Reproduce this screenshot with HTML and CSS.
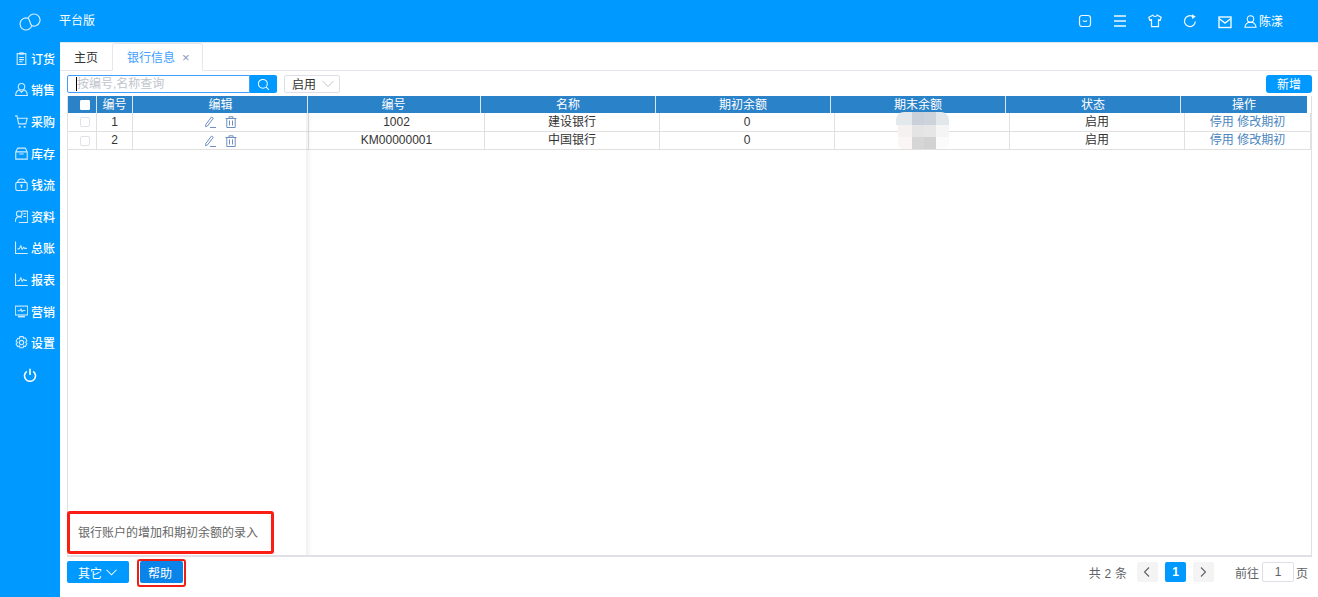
FILE: index.html
```html
<!DOCTYPE html>
<html lang="zh">
<head>
<meta charset="utf-8">
<title>银行信息</title>
<link rel="stylesheet" href="styles.css">
</head>
<body>
<div class="app">
  <header class="topbar">
    <div class="brand">
      <svg class="logo" viewBox="0 0 20 16" width="20" height="16"><path d="M8.200 4.400A6 6 0 1 1 11.800 11.600A6 6 0 1 1 8.200 4.400C10.500 6 9.500 10 11.800 11.600"/></svg>
      <span class="brand-name">平台版</span>
    </div>
    <div class="top-tools">
      <svg class="ti" viewBox="0 0 14 14"><rect x="1.500" y="1.500" width="11" height="11" rx="2.500"/><path d="M5 6.500c.8 1.200 3.200 1.200 4 0"/></svg>
      <svg class="ti ti-bars" viewBox="0 0 14 14"><path d="M1 2h12M1 7h12M1 12h12"/></svg>
      <svg class="ti" viewBox="0 0 14 14"><path d="M4.800 1.200L.8 3.300l1 3 1.700-.6v7h7v-7l1.700.6 1-3-4-2.100c-.5 1.700-3.900 1.700-4.400 0z"/></svg>
      <svg class="ti" viewBox="0 0 14 14"><path d="M12.300 7.500A5.400 5.400 0 1 1 9.500 2.400"/><path class="fill" d="M9 .3l3.800 2.500L9 5z"/></svg>
      <svg class="ti ti-mail" viewBox="0 0 14 14"><rect x="1" y="2" width="12" height="10.500"/><path d="M1 3.500l6 4.500 6-4.500"/></svg>
      <span class="user">
        <svg class="ti-user" viewBox="0 0 14 14"><circle cx="7" cy="4.300" r="3.500"/><path d="M1 13.300c.3-3.500 3-5.500 6-5.500s5.700 2 6 5.500z"/></svg>
        <span>陈漾</span>
      </span>
    </div>
  </header>

  <div class="body">
    <nav class="sidebar">
      <a class="nav-item"><svg viewBox="0 0 12 12"><path d="M2 1.500h8v10H2zM3.800 5h4.400M3.800 7h4.400M3.800 9h3"/><path class="fill" d="M4 .3h4v2.200H4z"/></svg><span>订货</span></a>
      <a class="nav-item"><svg viewBox="0 0 12 12"><circle cx="6" cy="3.500" r="3"/><path d="M4.200 6.300C2 6.900.7 8.700.6 11.500h10.800c-.1-2.800-1.400-4.600-3.600-5.200M4.200 6.800L6 8.500l1.800-1.700"/></svg><span>销售</span></a>
      <a class="nav-item"><svg viewBox="0 0 12 12"><path d="M.1 .8h1.700l1.600 7.400h6.500L11.300 3 2.400 2.800"/><path d="M3.500 11h1.700M8 11h1.700" stroke-width="1.500"/></svg><span>采购</span></a>
      <a class="nav-item"><svg viewBox="0 0 12 12"><path d="M2.500 1h7l1.800 3.500v6.700H.7V4.500zM.7 4.500h10.600M4 6.500h4"/></svg><span>库存</span></a>
      <a class="nav-item"><svg viewBox="0 0 12 12"><rect x=".7" y="4" width="10.600" height="7.500" rx="1.500"/><path d="M2.500 4c0-4.200 7-4.200 7 0"/><path class="fill" d="M5 6h2v1.500l-.5.300V9.500h-1V7.800L5 7.500z"/></svg><span>钱流</span></a>
      <a class="nav-item"><svg viewBox="0 0 12 12"><circle cx="3.900" cy="3.500" r="2.600"/><path d="M.2 11c.2-3 1.700-4.700 3.700-4.700 1 0 1.800.4 2.400 1.100M6.500 1h5.200v10.500H3.500M7.800 3.500h2.500M7.800 6h2.500"/></svg><span>资料</span></a>
      <a class="nav-item"><svg viewBox="0 0 12 12"><path d="M.5 .5v11h11.300M2.300 7.500l1.800-.5 1.300-2.500 1.200 3.300 1.400-2 1 1h2"/></svg><span>总账</span></a>
      <a class="nav-item"><svg viewBox="0 0 12 12"><path d="M.5 .5v11h11.300M2.300 7.500l1.800-.5 1.300-2.500 1.200 3.300 1.400-2 1 1h2"/></svg><span>报表</span></a>
      <a class="nav-item"><svg viewBox="0 0 12 12"><rect x=".3" y="1" width="11.400" height="8.200"/><path d="M2.500 5.300h2l1-1.500 1 2.300 1-1h2"/><path d="M2.800 10.700h6.400" stroke-width="1.500"/></svg><span>营销</span></a>
      <a class="nav-item"><svg viewBox="0 0 12 12"><path d="M4.500 .6h3l.4 1.600 1.600-.5 1.500 2.600-1.200 1.400 1.200 1.400-1.500 2.600-1.600-.5-.4 1.600h-3l-.4-1.600-1.600.5L1 7.500 2.200 6.100 1 4.700l1.500-2.600 1.600.5z"/><circle cx="6" cy="6" r="2"/></svg><span>设置</span></a>
      <a class="nav-power"><svg viewBox="0 0 14 14"><path d="M7 .8v6.200M3.800 3.300a5.500 5.500 0 1 0 6.400 0"/></svg></a>
    </nav>

    <main class="main">
      <div class="tabs">
        <span class="tab">主页</span>
        <span class="tab tab-active">银行信息<i class="tab-close">×</i></span>
      </div>

      <div class="content">
        <div class="toolbar">
          <div class="search">
            <input class="search-input" placeholder="按编号,名称查询">
            <span class="caret"></span>
            <button class="search-btn" aria-label="搜索"><svg viewBox="0 0 14 14"><circle cx="6.300" cy="6.300" r="4.800"/><path d="M9.800 9.800l3 3"/></svg></button>
          </div>
          <div class="select">启用<svg viewBox="0 0 12 12"><path d="M.5 3L6 8.500 11.500 3"/></svg></div>
          <button class="btn-add">新增</button>
        </div>

        <div class="grid">
          <div class="thead">
            <div class="th c-check"><span class="cb cb-head"></span></div>
            <div class="th c-num">编号</div>
            <div class="th c-edit">编辑</div>
            <div class="th c-a">编号</div>
            <div class="th c-b">名称</div>
            <div class="th c-b">期初余额</div>
            <div class="th c-b">期末余额</div>
            <div class="th c-b">状态</div>
            <div class="th c-last">操作</div>
          </div>
          <div class="row">
            <div class="td c-check"><span class="cb"></span></div>
            <div class="td c-num">1</div>
            <div class="td c-edit icons">
              <svg viewBox="0 0 12 12"><path d="M.8 8.500L6.500 1l1.800 1.300-5.700 7.500-1.900 1zM5 11.500h6"/></svg>
              <svg viewBox="0 0 12 12"><path d="M.5 2.500h11M4 2.500V.8h4v1.700M1.800 2.500v9h8.400v-9M4.500 4.500v5M7.500 4.500v5"/></svg>
            </div>
            <div class="td c-a2">1002</div>
            <div class="td c-b">建设银行</div>
            <div class="td c-b">0</div>
            <div class="td c-b"></div>
            <div class="td c-b">启用</div>
            <div class="td c-last2 ops">停用 修改期初</div>
          </div>
          <div class="row">
            <div class="td c-check"><span class="cb"></span></div>
            <div class="td c-num">2</div>
            <div class="td c-edit icons">
              <svg viewBox="0 0 12 12"><path d="M.8 8.500L6.500 1l1.800 1.300-5.700 7.500-1.900 1zM5 11.500h6"/></svg>
              <svg viewBox="0 0 12 12"><path d="M.5 2.500h11M4 2.500V.8h4v1.700M1.800 2.500v9h8.400v-9M4.500 4.500v5M7.500 4.500v5"/></svg>
            </div>
            <div class="td c-a2">KM00000001</div>
            <div class="td c-b">中国银行</div>
            <div class="td c-b">0</div>
            <div class="td c-b"></div>
            <div class="td c-b">启用</div>
            <div class="td c-last2 ops">停用 修改期初</div>
          </div>
          <div class="fixed-shadow"></div>
          <div class="mosaic">
            <i class="m1"></i><i class="m2"></i><i class="m3"></i><i class="m4"></i>
            <i class="m5"></i><i class="m6"></i><i class="m7"></i><i class="m8"></i>
            <i class="m9"></i><i class="m10"></i><i class="m11"></i><i class="m12"></i>
          </div>
          <div class="help-note">银行账户的增加和期初余额的录入</div>
        </div>

        <div class="footer">
          <button class="btn-other">其它<svg viewBox="0 0 12 12"><path d="M.5 3L6 8.500 11.500 3"/></svg></button>
          <button class="btn-help">帮助</button>
          <div class="pager">
            <span class="total">共 2 条</span>
            <button class="pg"><svg viewBox="0 0 12 12"><path d="M8 1.500L3.500 6 8 10.500"/></svg></button>
            <button class="pg pg-on">1</button>
            <button class="pg"><svg viewBox="0 0 12 12"><path d="M4 1.500L8.500 6 4 10.500"/></svg></button>
            <span class="goto">前往</span>
            <span class="page-input">1</span>
            <span class="page-unit">页</span>
          </div>
        </div>
      </div>
    </main>
  </div>
</div>
</body>
</html>
```
FILE: styles.css
```css
* { box-sizing: border-box; }
html, body { margin: 0; height: 100%; overflow: hidden; }
body {
  font-family: "Liberation Sans", "Noto Sans CJK SC", sans-serif;
  font-size: 12px;
  color: #333;
  background: #fff;
}
button { font: inherit; border: 0; padding: 0; }
.app { display: flex; flex-direction: column; width: 1318px; height: 597px; }

.topbar {
  height: 42px;
  flex: none;
  background: #0099ff;
  color: #fff;
  display: flex;
  align-items: center;
  justify-content: space-between;
}
.brand { display: flex; align-items: center; padding-left: 20px; }
.logo { margin-right: 19px; margin-top: 2px; fill: none; stroke: #d3ecff; stroke-width: 1.200; overflow: visible; }
.brand-name { position: relative; top: -2px; }
.top-tools { display: flex; align-items: center; padding-right: 35px; }
.ti { width: 14px; height: 14px; fill: none; stroke: #f0f9ff; stroke-width: 1.200; margin-right: 21px; }
.ti .fill { fill: #f0f9ff; stroke: none; }
.ti-bars { stroke-width: 1.500; }
.ti-mail { margin-right: 12px; margin-top: 2px; stroke-width: 1.400; }
.user { display: flex; align-items: center; gap: 2px; }
.user span { position: relative; top: -1px; }
.ti-user { width: 13px; height: 13px; fill: none; stroke: #fff; stroke-width: 1.100; }

.body { flex: 1; display: flex; min-height: 0; }
.sidebar {
  width: 60px;
  flex: none;
  background: #0099ff;
  color: #fff;
  padding-top: .6px;
  display: flex;
  flex-direction: column;
}
.nav-item {
  height: 31.600px;
  display: flex;
  align-items: center;
  padding-left: 15px;
  gap: 3px;
  font-weight: 500;
}
.nav-item svg { width: 13px; height: 13px; fill: none; stroke: #d3ecff; stroke-width: 1; flex: none; }
.nav-item .fill { fill: #d3ecff; stroke: none; }
.nav-power { height: 32px; display: flex; align-items: center; justify-content: center; }
.nav-power svg { width: 14px; height: 14px; fill: none; stroke: #fff; stroke-width: 1.600; }

.main { flex: 1; display: flex; flex-direction: column; min-width: 0; }
.tabs {
  height: 29px;
  flex: none;
  display: flex;
  align-items: flex-end;
  border-top: 1px solid #dfe6ec;
  border-bottom: 1px solid #e4e7ed;
  padding-left: 1px;
}
.tab { height: 27px; line-height: 30px; padding: 0 14px 0 13px; color: #303133; }
.tab-active {
  width: 91px;
  line-height: 28px;
  padding: 0 0 0 14px;
  color: #409eff;
  background: #fff;
  border: 1px solid #e4e7ed;
  border-bottom-color: #fff;
  border-radius: 3px 3px 0 0;
  margin-bottom: -1px;
  height: 28px;
}
.tab-close { font-style: normal; margin-left: 7px; color: #8a9ab5; font-size: 13px; }

.content { flex: 1; min-height: 0; display: flex; flex-direction: column; padding: 4px 6px 0 7px; }
.toolbar { height: 18px; flex: none; display: flex; align-items: stretch; }
.search { display: flex; width: 210px; position: relative; }
.search-input {
  width: 183px;
  border: 1px solid #409eff;
  padding: 0 0 0 9px;
  font: inherit;
  color: #333;
  outline: 0;
  border-radius: 2px 0 0 2px;
  background: #fff;
}
.search-input::placeholder { color: #c0c4cc; opacity: 1; }
.caret {
  position: absolute;
  left: 9px;
  top: 2px;
  width: 1px;
  height: 14px;
  background: #000;
}
.search-btn {
  width: 27px;
  background: #0099ff;
  border-radius: 0 2px 2px 0;
  display: flex;
  align-items: center;
  justify-content: center;
}
.search-btn svg { width: 13px; height: 13px; fill: none; stroke: #fff; stroke-width: 1.100; }
.select {
  width: 56px;
  margin-left: 7px;
  border: 1px solid #dcdfe6;
  border-radius: 2px;
  display: flex;
  align-items: center;
  justify-content: space-between;
  padding: 0 5px 1px 7px;
  color: #333;
}
.select svg { width: 12px; height: 12px; fill: none; stroke: #c0c4cc; stroke-width: 1; }
.btn-add {
  margin-left: auto;
  width: 46px;
  padding-bottom: 2px;
  background: #0099ff;
  color: #fff;
  border-radius: 3px;
  font-size: 12px;
}

.grid {
  position: relative;
  flex: 1;
  min-height: 0;
  margin-top: 3px;
  border-left: 1px solid #e0e0e0;
  border-right: 1px solid #e0e0e0;
  border-bottom: 2px solid #e0e0e6;
}
.thead { display: flex; height: 17px; background: #2a82c8; color: #fff; margin-right: 4px; }
.row { display: flex; height: 18px; border-bottom: 1px solid #e0e0e0; }
.thead + .row { height: 19px; }
.th { display: flex; align-items: center; justify-content: center; border-right: 1px solid #d8e6f2; line-height: 1; }
.td { display: flex; align-items: center; justify-content: center; border-right: 1px solid #e0e0e0; color: #333; line-height: 1; padding-bottom: 2px; }
.thead + .row .td { padding-bottom: 1px; }
.row .td.c-check, .row .td.icons { padding-bottom: 0; }
.c-check { width: 29px; flex: none; padding-left: 5px; }
.c-num { width: 36px; flex: none; }
.c-edit { width: 176px; flex: none; }
.c-a { width: 172px; flex: none; }
.c-a2 { width: 176px; flex: none; }
.c-b { width: 175px; flex: none; }
.c-last { flex: 1; border-right: 0; }
.c-last2 { flex: 1; }
.th.c-edit { width: 175px; padding-left: 1px; }
.th.c-a { width: 173px; padding-right: 1px; }
.cb { width: 10px; height: 10px; border: 1px solid #e0e2e8; border-radius: 2px; background: #fff; display: block; }
.cb-head { border-color: #fff; border-radius: 1px; }
.icons { gap: 8px; padding-left: 1px; }
.icons svg { width: 12px; height: 12px; fill: none; stroke: #6f8fc0; stroke-width: 1; }
.ops { color: #4a86c0; }

.fixed-shadow {
  position: absolute;
  left: 238px;
  top: 17px;
  bottom: 0;
  width: 6px;
  background: linear-gradient(to right, rgba(0,0,0,.06), rgba(0,0,0,0));
}
.mosaic {
  position: absolute;
  left: 830px;
  top: 16px;
  display: grid;
  grid-template-columns: 14px 12px 12px 13px;
  grid-template-rows: 13px 12px 12px;
}
.mosaic i { display: block; }
.m1 { background: #e3e8ec; border-radius: 8px 0 0 0; margin-left: -2px; }
.m2 { background: #c9d0d9; }
.m3 { background: #cdd3da; }
.m4 { background: #e2e7ec; border-radius: 0 8px 0 0; }
.m5 { background: #f6f1f1; }
.m6 { background: #e4e4e4; }
.m7 { background: #e6e6e6; }
.m8 { background: #f5f5f6; }
.m9 { background: #fbf5f5; border-radius: 0 0 0 5px; }
.m10 { background: #d6d6d6; }
.m11 { background: #d2d2d2; }
.m12 { background: #fbfbfb; border-radius: 0 0 5px 0; }

.help-note {
  position: absolute;
  left: -1px;
  bottom: 1px;
  width: 207px;
  height: 43px;
  border: 3px solid #fa1e14;
  border-radius: 3px;
  background: #fff;
  color: #666;
  padding: 0 0 2px 8px;
  display: flex;
  align-items: center;
}

.footer { height: 40px; flex: none; display: flex; align-items: flex-start; padding-top: 4px; }
.btn-other {
  width: 62px;
  height: 22px;
  background: #0099ff;
  color: #fff;
  border-radius: 2px;
  display: flex;
  align-items: center;
  justify-content: center;
  gap: 4px;
  padding-right: 1px;
}
.btn-other svg { width: 11px; height: 11px; fill: none; stroke: #fff; stroke-width: 1.100; }
.btn-help {
  position: relative;
  width: 43px;
  height: 22px;
  margin-left: 11px;
  padding-right: 3px;
  background: #0a84e8;
  color: #fff;
  border-radius: 2px;
}
.btn-help::after {
  content: "";
  position: absolute;
  left: -3px;
  right: -3px;
  top: -2px;
  bottom: -4px;
  border: 2px solid #f01e14;
  border-radius: 3px;
}
.pager { margin: 1px 0 0 auto; display: flex; align-items: center; height: 20px; color: #606266; }
.total { margin-right: 10px; word-spacing: .5px; }
.pg {
  width: 21px;
  height: 20px;
  background: #f4f4f5;
  border-radius: 2px;
  margin-right: 7px;
  display: flex;
  align-items: center;
  justify-content: center;
  color: #606266;
}
.pg svg { width: 12px; height: 12px; fill: none; stroke: #606266; stroke-width: 1.100; }
.pg-on { background: #0099ff; color: #fff; font-weight: 700; }
.goto { margin-left: 14px; margin-right: 3px; }
.page-input {
  width: 32px;
  height: 20px;
  border: 1px solid #dcdfe6;
  border-radius: 2px;
  display: flex;
  align-items: center;
  justify-content: center;
  margin-right: 2px;
}
.page-unit { margin-right: 4px; }
```
